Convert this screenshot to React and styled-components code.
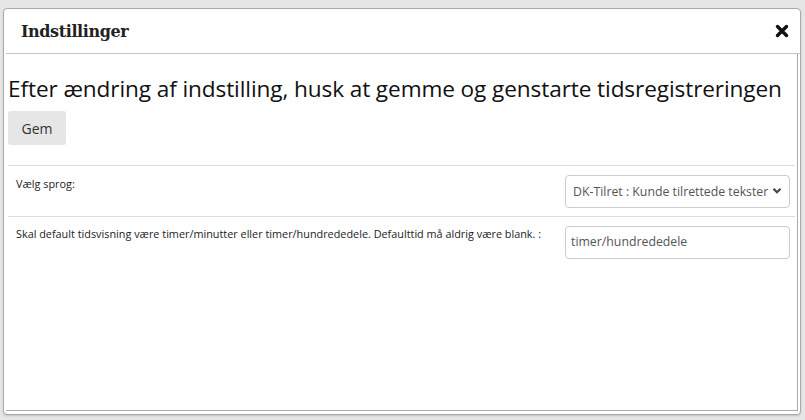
import React from "react";
import styled, { createGlobalStyle } from "styled-components";

const GlobalStyle = createGlobalStyle`
  html, body {
    margin: 0;
    padding: 0;
    background: #e6e6e6;
  }
  * { box-sizing: border-box; }
`;

const Page = styled.div`
  width: 805px;
  height: 420px;
  padding: 8px 4px 5px 3px;
`;

const Dialog = styled.div`
  height: 407px;
  background: #fff;
  border: 1px solid #aaa;
  border-radius: 4px;
  display: flex;
  flex-direction: column;
  box-shadow: 0 1px 2px rgba(0, 0, 0, 0.15);
`;

const Header = styled.div`
  height: 45px;
  display: flex;
  align-items: center;
  justify-content: space-between;
  padding: 0 10px 0 15px;
  margin-left: 2px;
  border-bottom: 1px solid #c4c4c4;
`;

const Title = styled.h4`
  margin: 0;
  font-family: "DejaVu Serif", "Liberation Serif", serif;
  font-weight: bold;
  font-size: 16px;
  color: #222;
  letter-spacing: -0.4px;
`;

const CloseButton = styled.button`
  border: 0;
  background: none;
  padding: 0;
  width: 16px;
  height: 16px;
  display: flex;
  align-items: center;
  justify-content: center;
  cursor: pointer;
`;

const Body = styled.div`
  flex: 1;
  margin: 0 2px 3px 2px;
  border-right: 1px solid #aaa;
  border-bottom: 1px solid #aaa;
  padding: 0 0 0 2px;
  font-family: "Open Sans", sans-serif;
  color: #111;
`;

const Notice = styled.h3`
  margin: 21px 0 0 0;
  font-size: 22.6px;
  font-weight: normal;
  line-height: 28px;
  letter-spacing: -0.1px;
  white-space: nowrap;
`;

const SaveButton = styled.button`
  margin-top: 8px;
  width: 58px;
  height: 34px;
  border: 0;
  border-radius: 3px;
  background: #e6e6e6;
  font-family: "Open Sans", sans-serif;
  font-size: 14px;
  font-weight: 500;
  color: #333;
  cursor: pointer;
`;

const SettingsList = styled.div`
  margin-top: 20px;
  margin-right: 2px;
  border-top: 1px solid #ddd;
`;

const Row = styled.div`
  display: flex;
  justify-content: space-between;
  align-items: flex-start;
  height: 51px;
  padding: 9px 5px 0 8px;
  border-bottom: 1px solid #ddd;
  &:last-child {
    border-bottom: 0;
  }
`;

const Label = styled.label`
  font-size: 10.85px;
  color: #222;
  padding-top: ${(p) => p.offset || 0}px;
`;

const Field = styled.div`
  position: relative;
  width: 225px;
  height: 33px;
`;

const Select = styled.select`
  width: 100%;
  height: 100%;
  appearance: none;
  border: 1px solid #ccc;
  border-radius: 4px;
  background: #fff;
  padding: 0 20px 0 7px;
  font-family: "Open Sans", sans-serif;
  font-size: 12.3px;
  color: #555;
`;

const Chevron = styled.svg`
  position: absolute;
  right: 8px;
  top: 12px;
  pointer-events: none;
`;

const Input = styled.input`
  width: 100%;
  height: 100%;
  border: 1px solid #ccc;
  border-radius: 4px;
  padding: 0 5px 2px;
  font-family: "Open Sans", sans-serif;
  font-size: 12.3px;
  color: #555;
  outline: none;
`;

export default function App() {
  return (
    <>
      <GlobalStyle />
      <Page>
        <Dialog>
          <Header>
            <Title>Indstillinger</Title>
            <CloseButton aria-label="Luk">
              <svg width="14" height="14" viewBox="0 0 14 14">
                <path
                  d="M2.5 2.5 L11.5 11.5 M11.5 2.5 L2.5 11.5"
                  stroke="#111"
                  strokeWidth="3.4"
                  strokeLinecap="round"
                />
              </svg>
            </CloseButton>
          </Header>
          <Body>
            <Notice>
              Efter ændring af indstilling, husk at gemme og genstarte
              tidsregistreringen
            </Notice>
            <SaveButton>Gem</SaveButton>
            <SettingsList>
              <Row>
                <Label offset={1}>Vælg sprog:</Label>
                <Field>
                  <Select defaultValue="dk">
                    <option value="dk">DK-Tilret : Kunde tilrettede tekster</option>
                  </Select>
                  <Chevron width="10" height="8" viewBox="0 0 10 8">
                    <path
                      d="M1.5 1.8 L5 5.3 L8.5 1.8"
                      fill="none"
                      stroke="#444"
                      strokeWidth="2.2"
                    />
                  </Chevron>
                </Field>
              </Row>
              <Row>
                <Label offset={0}>
                  Skal default tidsvisning være timer/minutter eller
                  timer/hundrededele. Defaulttid må aldrig være blank. :
                </Label>
                <Field>
                  <Input defaultValue="timer/hundrededele" />
                </Field>
              </Row>
            </SettingsList>
          </Body>
        </Dialog>
      </Page>
    </>
  );
}
